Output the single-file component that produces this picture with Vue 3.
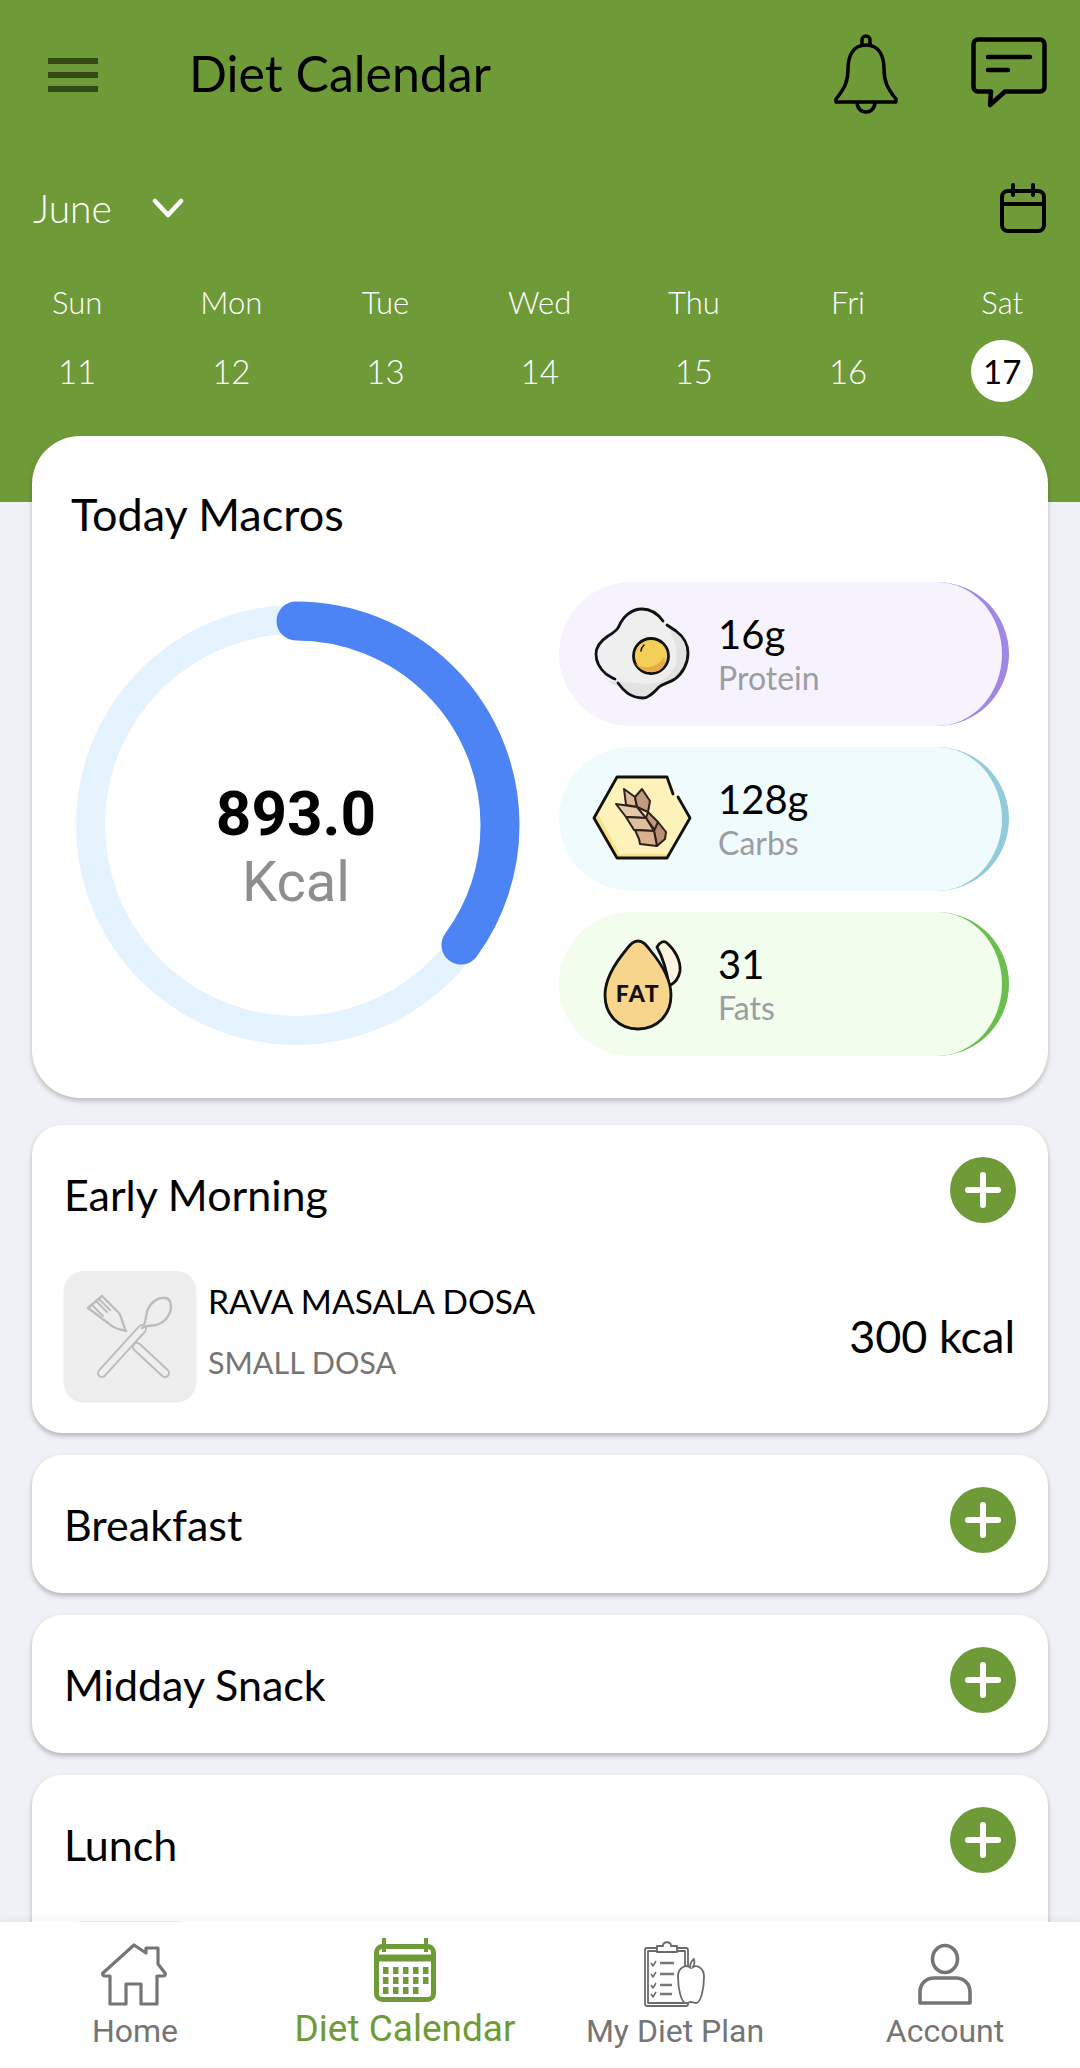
<template>
  <div class="page">
    <header class="head">
      <div class="topbar">
        <div class="burger"><i></i><i></i><i></i></div>
        <div class="title">Diet Calendar</div>
        <svg class="bell" width="70" height="82" viewBox="0 0 70 82" fill="none" stroke="#000" stroke-width="3.5" stroke-linejoin="round">
          <path d="M31 14V8a4 4 0 0 1 8 0v6" />
          <path d="M35 13c-13 0-18 11-18 24 0 12-3 19-12 30v3h60v-3c-9-11-12-18-12-30 0-13-5-24-18-24z" />
          <path d="M26 70c0 6 4 10 9 10s9-4 9-10" />
        </svg>
        <svg class="chat" width="76" height="72" viewBox="0 0 76 72" fill="none" stroke="#000" stroke-width="4.5" stroke-linejoin="round" stroke-linecap="round">
          <path d="M7 2.500h62a4.500 4.500 0 0 1 4.500 4.500v43a4.500 4.500 0 0 1-4.500 4.500H34L19 68l1-13.500H7A4.500 4.500 0 0 1 2.500 50V7A4.500 4.500 0 0 1 7 2.500z" />
          <path d="M17 20h42M17 33h20" />
        </svg>
      </div>
      <div class="month">
        <span class="month-name">June</span>
        <svg class="chev" width="32" height="20" viewBox="0 0 32 20" fill="none" stroke="#fff" stroke-width="4.5" stroke-linecap="round" stroke-linejoin="round"><path d="M3 3l13 14L29 3" /></svg>
        <svg class="cal-small" width="46" height="50" viewBox="0 0 46 50" fill="none" stroke="#000" stroke-width="4" stroke-linejoin="round" stroke-linecap="round">
          <rect x="2" y="8" width="42" height="40" rx="6" />
          <path d="M2 21h42M13 2v10M33 2v10" />
        </svg>
      </div>
      <div class="week">
        <div v-for="d in days" :key="d.num" class="day">
          <span class="dname">{{ d.name }}</span>
          <span class="dnum" :class="{ on: d.num === 17 }">{{ d.num }}</span>
        </div>
      </div>
    </header>

    <section class="macros">
      <h2 class="macros-title">Today Macros</h2>
      <div class="macros-body">
        <div class="ring">
          <svg width="460" height="460" viewBox="0 0 460 460" fill="none">
            <circle cx="230" cy="230" r="205.500" stroke="#e4f3fd" stroke-width="29" />
            <circle cx="230" cy="230" r="204" stroke="#4c84f6" stroke-width="39" stroke-linecap="round" :stroke-dasharray="`${arc} 2000`" transform="rotate(-90 230 230)" />
          </svg>
          <div class="ring-text">
            <div class="kcal-num">893.0</div>
            <div class="kcal-unit">Kcal</div>
          </div>
        </div>
        <div class="pills">
          <div class="pill protein">
            <svg class="pill-ico" width="110" height="110" viewBox="0 0 110 110">
              <path d="M57 10c10 0 16 5 21 12 3 5 8 6 13 10 8 6 12 14 12 22 0 10-5 20-15 26-6 4-11 4-16 8-5 5-10 11-16 11-9 0-15-6-20-13-4-6-10-7-15-11-7-6-10-13-10-20 0-8 6-14 12-18 5-3 9-5 11-10 4-9 12-17 23-17z" fill="#efefef" stroke="none" />
              <path d="M80 24c5 4 9 6 11 8 8 6 12 14 12 22 0 10-5 20-15 26-6 4-11 4-16 8-5 5-10 11-16 11-6 0-12-4-16-9-6-3-12-4-17-8l40 3c12-1 24-8 28-20 3-12-2-30-11-41z" fill="#e2e2e2" />
              <path d="M78 22c-5-7-11-12-21-12-11 0-19 8-23 17-2 5-6 7-11 10-6 4-12 10-12 18 0 7 3 14 10 20 3 2 6 4 9 5M33 84c5 7 12 15 25 15 6 0 11-6 16-11 5-4 10-4 16-8 8-6 13-16 13-26 0-8-4-16-12-22-3-2-6-4-9-6" fill="none" stroke="#111" stroke-width="2.800" stroke-linecap="round" />
              <circle cx="66" cy="57" r="17.500" fill="#f3cf58" stroke="#111" stroke-width="2.800" />
              <path d="M50 64c8 8 24 4 29-6 3 6-1 12-6 14-8 3-18 0-23-8z" fill="#e6ac4a" />
              <path d="M59 46c-2 2-3 3-3 6" fill="none" stroke="#111" stroke-width="1.500" stroke-linecap="round" />
            </svg>
            <div class="pill-text"><div class="pill-val">16g</div><div class="pill-lab">Protein</div></div>
          </div>
          <div class="pill carbs">
            <svg class="pill-ico" width="110" height="110" viewBox="0 0 110 110">
              <path d="M32 13h50l23 41-23 40H32L9 54z" fill="#fdf2ba" />
              <path d="M9 54l23 40h50l2-4H35L13 50z" fill="#fde08a" />
              <path d="M88 30l-6-17H32L9 54l23 40h50l23-40-12-21" fill="none" stroke="#111" stroke-width="2.800" stroke-linejoin="round" stroke-linecap="round" />
              <g stroke="#2e211a" stroke-width="2" stroke-linejoin="round">
                <path d="M39 25l11 8 2 10-11-2z" fill="#dcb898" />
                <path d="M57 25l8 12-2 11-11-5-2-10z" fill="#c49a7e" />
                <path d="M31 40l21 3 9 11-20-1z" fill="#e6c9a9" />
                <path d="M63 48l10 10-2 10-10-14z" fill="#c49a7e" />
                <path d="M41 53l20 1 8 13-20-1z" fill="#e0bf9f" />
                <path d="M73 58l8 10-1 7-8 7-3-15z" fill="#b98f74" />
                <path d="M50 66l19 1 3 15-17-2-1-5z" fill="#d8b191" />
              </g>
            </svg>
            <div class="pill-text"><div class="pill-val">128g</div><div class="pill-lab">Carbs</div></div>
          </div>
          <div class="pill fats">
            <svg class="pill-ico fat-ico" width="110" height="110" viewBox="0 0 110 110">
              <path d="M72 16c3-5 7-7 10-4 8 7 14 18 13 28-1 7-5 12-11 15-2-14-6-28-12-39z" fill="#fdf3e0" stroke="#111" stroke-width="2.800" stroke-linejoin="round" />
              <path d="M53 10c5 0 8 4 12 9 10 12 21 28 21 45 0 20-14 34-33 34S20 84 20 64c0-17 11-33 21-45 4-5 7-9 12-9z" fill="#f8d58c" stroke="#111" stroke-width="2.800" />
              <text x="53" y="71" text-anchor="middle" class="fat-txt">FAT</text>
            </svg>
            <div class="pill-text"><div class="pill-val">31</div><div class="pill-lab">Fats</div></div>
          </div>
        </div>
      </div>
    </section>

    <section class="meals">
      <div v-for="m in meals" :key="m.name" class="meal">
        <div class="meal-head">
          <span class="meal-name">{{ m.name }}</span>
          <button class="add"><svg width="36" height="36" viewBox="0 0 36 36" stroke="#fff" stroke-width="6" stroke-linecap="round"><path d="M18 3v30M3 18h30" /></svg></button>
        </div>
        <div v-if="m.item" class="item">
          <div class="thumb">
            <svg width="132" height="130" viewBox="0 0 132 130" fill="none" stroke-linecap="round" stroke-linejoin="round">
              <path d="M38 102L78 58" stroke="#bdbdbd" stroke-width="10" />
              <path d="M38 102L78 58" stroke="#eee" stroke-width="6" />
              <path d="M78 57c5-5 3-13 6-19 4-8 11-12 17-11 5 0 6 5 6 10-1 8-7 15-15 17-5 1-8 0-14 3z" fill="#eee" stroke="#bdbdbd" stroke-width="2.400" />
              <path d="M73 76l28 26" stroke="#bdbdbd" stroke-width="10" />
              <path d="M73 76l28 26" stroke="#eee" stroke-width="6" />
              <path d="M24 37l14-12 17 17c3 4 3 10 7 18-7-2-12-2-18-8z" fill="#eee" stroke="#bdbdbd" stroke-width="2.400" />
              <path d="M28 34l11 11M32 30l11 11M35 28l11 11" stroke="#bdbdbd" stroke-width="2" />
            </svg>
          </div>
          <div class="item-text">
            <div class="item-name">{{ m.item.name }}</div>
            <div class="item-sub">{{ m.item.sub }}</div>
          </div>
          <div class="item-kcal">{{ m.item.kcal }}</div>
        </div>
      </div>
    </section>

    <nav class="nav">
      <div class="tab">
        <svg width="72" height="72" viewBox="0 0 72 72" fill="none" stroke="#757575" stroke-width="3.200" stroke-linejoin="round">
          <path d="M11 40v28h16V48h15v20h16V40h6c2 0 3-2 2-3L59 28V12H47v5l-12-8L4 37c-1 1 0 3 2 3z" />
        </svg>
        <span class="tab-lab">Home</span>
      </div>
      <div class="tab active">
        <svg width="72" height="72" viewBox="0 0 72 72" fill="none">
          <rect x="7.500" y="10.500" width="57" height="53" rx="6" stroke="#6f9a38" stroke-width="5" />
          <path d="M7 22h58" stroke="#6f9a38" stroke-width="7" />
          <path d="M15 2v14M57 2v14" stroke="#6f9a38" stroke-width="4" />
          <g fill="#6f9a38">
            <rect v-for="c in calDots" :key="c.k" :x="c.x" :y="c.y" width="5.500" height="7" />
          </g>
        </svg>
        <span class="tab-lab">Diet Calendar</span>
      </div>
      <div class="tab">
        <svg width="72" height="72" viewBox="0 0 72 72" fill="none" stroke="#6a6a6a" stroke-width="1.800" stroke-linejoin="round">
          <rect x="6" y="12" width="43" height="58" rx="2" />
          <rect x="9" y="15" width="37" height="52" />
          <path d="M18 16v-6h6c0-5 8-5 8 0h6v6z" fill="#fff" />
          <path d="M12 27l2 3 3-5M12 38l2 3 3-5M12 49l2 3 3-5M12 58l2 3 3-5" stroke-width="1.500" />
          <path d="M21 27h14M21 38h14M21 49h12M21 58h12" stroke-width="2.400" stroke="#777" />
          <path d="M52 32c-5-4-13-1-13 9 0 11 3 26 8 26 2 0 3-1 5-1s3 1 5 1c5 0 8-15 8-26 0-10-8-13-13-9z" fill="#fff" />
          <path d="M51 32c0-4 1-7 4-9 1 4 0 7-2 9" fill="#fff" />
        </svg>
        <span class="tab-lab">My Diet Plan</span>
      </div>
      <div class="tab">
        <svg width="72" height="72" viewBox="0 0 72 72" fill="none" stroke="#757575" stroke-width="3.600">
          <ellipse cx="36" cy="23" rx="12.500" ry="13.500" />
          <path d="M11 67V56c0-9 7-14 14-14h22c7 0 14 5 14 14v11z" stroke-linejoin="round" />
        </svg>
        <span class="tab-lab">Account</span>
      </div>
    </nav>
  </div>
</template>

<script setup>
const days = [
  { name: 'Sun', num: 11 },
  { name: 'Mon', num: 12 },
  { name: 'Tue', num: 13 },
  { name: 'Wed', num: 14 },
  { name: 'Thu', num: 15 },
  { name: 'Fri', num: 16 },
  { name: 'Sat', num: 17 }
];

const meals = [
  { name: 'Early Morning', item: { name: 'RAVA MASALA DOSA', sub: 'SMALL DOSA', kcal: '300 kcal' } },
  { name: 'Breakfast' },
  { name: 'Midday Snack' },
  { name: 'Lunch', item: { name: '', sub: '', kcal: '' } }
];

// 893 kcal drawn as about 35% of the ring
const arc = 2 * Math.PI * 204 * 0.35;

const calDots = [];
for (let r = 0; r < 3; r++) {
  for (let c = 0; c < 5; c++) {
    if (r === 2 && c === 4) continue;
    calDots.push({ k: `${r}-${c}`, x: 14 + c * 10, y: 31 + r * 10 });
  }
}
</script>

<style scoped>
.page {
  position: relative;
  height: 2068px;
  overflow: hidden;
  background: #eff1f6;
  font-family: "Lato", "Noto Sans", sans-serif;
  color: #000;
}
.head { height: 502px; background: #6f9a38; }
.topbar { height: 150px; display: flex; align-items: center; padding: 0 33px 0 48px; }
.burger { width: 50px; display: flex; flex-direction: column; gap: 8px; }
.burger i { display: block; height: 6px; background: #334a17; }
.title { font-size: 50px; line-height: 60px; margin: -4px 0 0 91px; flex: 1; }
.bell { margin-right: 70px; margin-top: -4px; }
.chat { margin-top: -4px; }
.month { height: 116px; display: flex; align-items: center; padding: 0 34px 0 33px; }
.month-name { font-size: 39px; font-weight: 300; color: #fff; }
.chev { margin-left: 40px; }
.cal-small { margin-left: auto; }
.week { display: grid; grid-template-columns: repeat(7, 154.2px); }
.day { display: flex; flex-direction: column; align-items: center; color: #fff; font-weight: 300; }
.dname { height: 72px; line-height: 72px; font-size: 31px; }
.dnum { width: 62px; height: 62px; margin-top: 2px; line-height: 62px; text-align: center; font-size: 33px; border-radius: 50%; }
.dnum.on { background: #fff; color: #000; font-weight: 400; }

.macros {
  position: relative;
  margin: -66px 32px 0;
  height: 662px;
  box-sizing: border-box;
  padding: 0 39px 0 34px;
  background: #fff;
  border-radius: 48px;
  box-shadow: 0 3px 5px rgba(0, 0, 0, 0.22);
}
.macros-title { margin: 0; padding: 49px 0 39px 5px; font-size: 45px; line-height: 58px; font-weight: 400; }
.macros-body { display: flex; gap: 33px; }
.ring { position: relative; width: 460px; height: 460px; margin-top: 13px; flex: none; }
.ring svg { display: block; }
.ring-text { position: absolute; inset: 0; padding-top: 42px; display: flex; flex-direction: column; align-items: center; justify-content: center; font-family: "Roboto", sans-serif; }
.kcal-num { font-size: 62px; font-weight: 700; line-height: 70px; }
.kcal-unit { font-size: 56px; line-height: 62px; margin-top: 2px; color: #8e8e8e; }
.pills { flex: 1; display: flex; flex-direction: column; gap: 21px; }
.pill { height: 144px; box-sizing: border-box; display: flex; align-items: center; padding-left: 26px; border-radius: 72px; border-right: 7px solid; }
.pill-ico { flex: none; }
.fat-ico { margin-top: 4px; }
.pill-text { margin-left: 23px; }
.pill-val { font-size: 40px; line-height: 48px; }
.pill-lab { font-size: 32px; line-height: 40px; color: #9a9ea3; }
.protein { background: #f6f3fe; border-color: #9f87e3; }
.carbs { background: #f0fbfe; border-color: #92cbdb; }
.fats { background: #f2fdee; border-color: #6abf4f; }
.fat-txt { font-family: "Lato", sans-serif; font-weight: 900; font-size: 23px; letter-spacing: 1.500px; fill: #111; }

.meals { margin: 27px 32px 0; display: flex; flex-direction: column; gap: 22px; }
.meal { background: #fff; border-radius: 30px; box-shadow: 0 3px 5px rgba(0, 0, 0, 0.25); }
.meal-head { height: 138px; display: flex; align-items: center; padding: 0 32px; }
.meal-name { flex: 1; font-size: 43px; }
.add { width: 66px; height: 66px; margin-top: -8px; border: 0; padding: 0; border-radius: 50%; background: #6f9a38; display: flex; align-items: center; justify-content: center; }
.item { display: flex; align-items: center; margin-top: 8px; padding: 0 33px 32px 32px; }
.thumb { width: 132px; height: 130px; flex: none; background: #eee; border-radius: 20px; box-shadow: 0 1px 2px rgba(0, 0, 0, 0.12); }
.thumb svg { display: block; }
.item-text { flex: 1; margin-left: 12px; margin-top: -11px; }
.item-name { font-size: 33.5px; line-height: 44px; }
.item-sub { font-size: 30.5px; line-height: 40px; margin-top: 19px; color: #757575; }
.item-kcal { font-size: 45px; }

.nav {
  position: absolute;
  left: 0;
  right: 0;
  bottom: 0;
  height: 146px;
  box-sizing: border-box;
  padding-top: 14px;
  display: grid;
  grid-template-columns: repeat(4, 270px);
  background: #fff;
  box-shadow: 0 -3px 6px rgba(0, 0, 0, 0.04);
}
.tab { display: flex; flex-direction: column; align-items: center; font-family: "Roboto", sans-serif; color: #757575; }
.tab svg { display: block; flex: none; overflow: visible; }
.tab-lab { font-size: 32px; line-height: 40px; margin-top: 3px; }
.active { color: #6f9a38; }
.active .tab-lab { font-size: 37px; margin-top: 1px; }
</style>

<style>
html, body { margin: 0; background: #eff1f6; }
</style>
